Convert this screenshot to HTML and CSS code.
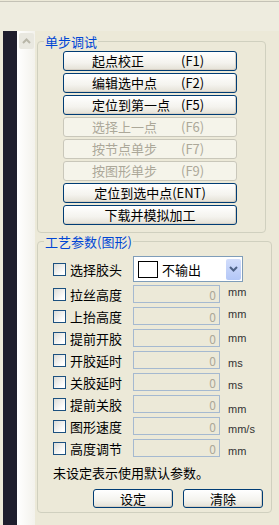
FILE: index.html
```html
<!DOCTYPE html>
<html lang="zh-CN">

<head>
    <meta charset="UTF-8">
    <meta name="viewport" content="width=device-width, initial-scale=1.0">
    <title>单步调试</title>
    <link rel="stylesheet" href="styles.css">
</head>

<body>
    <div class="topbar"></div>
    <div class="main">
        <div class="edge"></div>
        <div class="dark"></div>
        <div class="scroll">
            <div class="scroll-up">
                <svg width="9" height="6" viewBox="0 0 9 6"><path d="M1 5 L4.5 1.5 L8 5" fill="none" stroke="#b8b6a8" stroke-width="2"/></svg>
            </div>
        </div>

        <div class="panel">
            <!-- 单步调试 -->
            <fieldset class="group step">
                <legend>单步调试</legend>
                <div class="btn-list">
                    <button class="btn"><span class="name">起点校正</span>(F1)</button>
                    <button class="btn"><span class="name">编辑选中点</span>(F2)</button>
                    <button class="btn"><span class="name">定位到第一点</span>(F5)</button>
                    <button class="btn" disabled><span class="name">选择上一点</span>(F6)</button>
                    <button class="btn" disabled><span class="name">按节点单步</span>(F7)</button>
                    <button class="btn" disabled><span class="name">按图形单步</span>(F9)</button>
                    <button class="btn center">定位到选中点(ENT)</button>
                    <button class="btn center">下载并模拟加工</button>
                </div>
            </fieldset>

            <!-- 工艺参数 -->
            <fieldset class="group params">
                <legend>工艺参数(图形)</legend>
                <div class="param-body">
                    <div class="row first">
                        <span class="check"></span>
                        <span class="label">选择胶头</span>
                        <div class="combo">
                            <span class="swatch"></span>
                            <span class="combo-text">不输出</span>
                            <span class="combo-btn">
                                <svg width="9" height="6" viewBox="0 0 9 6"><path d="M1 1 L4.5 4.5 L8 1" fill="none" stroke="#4d6185" stroke-width="2"/></svg>
                            </span>
                        </div>
                    </div>
                    <div class="row"><span class="check"></span><span class="label">拉丝高度</span><span class="field">0</span><span class="unit up">mm</span></div>
                    <div class="row"><span class="check"></span><span class="label">上抬高度</span><span class="field">0</span><span class="unit up">mm</span></div>
                    <div class="row"><span class="check"></span><span class="label">提前开胶</span><span class="field">0</span><span class="unit">mm</span></div>
                    <div class="row"><span class="check"></span><span class="label">开胶延时</span><span class="field">0</span><span class="unit down">ms</span></div>
                    <div class="row"><span class="check"></span><span class="label">关胶延时</span><span class="field">0</span><span class="unit down">ms</span></div>
                    <div class="row"><span class="check"></span><span class="label">提前关胶</span><span class="field">0</span><span class="unit low">mm</span></div>
                    <div class="row"><span class="check"></span><span class="label">图形速度</span><span class="field">0</span><span class="unit down">mm/s</span></div>
                    <div class="row"><span class="check"></span><span class="label">高度调节</span><span class="field">0</span><span class="unit down">mm</span></div>
                    <p class="hint">未设定表示使用默认参数。</p>
                    <div class="actions">
                        <button class="btn small">设定</button>
                        <button class="btn small">清除</button>
                    </div>
                </div>
            </fieldset>
        </div>
    </div>
</body>

</html>
```

FILE: styles.css
```css
body {
    margin: 0;
    font-family: "Noto Sans CJK SC", "Noto Sans", sans-serif;
    font-size: 13px;
    color: #000;
    background-color: #ece9d8;
}

.topbar {
    height: 29px;
    margin-top: 1px;
    border-top: 1px solid #c4c2b6;
    background-color: #eeecdf;
}

.main {
    display: flex;
    height: 494px;
}

.edge {
    width: 3px;
    background-color: #ece9d8;
}

.dark {
    width: 14px;
    background-color: #1f1e2d;
}

.scroll {
    width: 18px;
    background: linear-gradient(to right, #ffffff, #f3f2ec);
}

.scroll-up {
    width: 15px;
    height: 16px;
    margin: 2px 0 0 2px;
    display: flex;
    align-items: center;
    justify-content: center;
    background-color: #e9e8e0;
    border-radius: 2px;
}

.panel {
    flex: 1;
    padding-left: 2px;
}

.group {
    margin: 0;
    padding: 0;
    border: 1px solid #d0d0bf;
    border-radius: 4px;
    min-width: 0;
    box-sizing: border-box;
}

.group legend {
    margin-left: 6px;
    padding: 0 1px;
    color: #0046d5;
    font-size: 13px;
    line-height: 15px;
}

.step {
    width: 229px;
    margin-top: 3px;
}

.btn-list {
    display: flex;
    flex-direction: column;
    gap: 2px;
    padding: 2px 0 7px 25px;
}

.btn {
    width: 174px;
    height: 20px;
    padding: 0 0 0 28px;
    font-family: inherit;
    font-size: 13px;
    line-height: 18px;
    color: #000;
    text-align: left;
    border: 1px solid #003c74;
    border-radius: 3px;
    background: linear-gradient(#ffffff, #f4f3ee 60%, #e4e1d6);
    box-shadow: inset -1px -1px 0 #d6d0c5;
    white-space: pre;
}

.btn .name {
    display: inline-block;
    width: 89px;
}

.btn.center {
    padding: 0;
    text-align: center;
}

.btn:disabled {
    color: #aca899;
    border-color: #c9c7ba;
    background: #f5f4ea;
    box-shadow: none;
}

.params {
    width: 235px;
    margin-top: 1px;
}

.param-body {
    padding: 7px 0 2px 15px;
}

.row {
    display: flex;
    align-items: center;
    height: 18px;
    margin-bottom: 4px;
}

.row.first {
    height: 26px;
    margin-bottom: 3px;
}

.check {
    width: 11px;
    height: 11px;
    border: 1px solid #1c5180;
    background: linear-gradient(135deg, #dcdcd7, #ffffff 80%);
}

.label {
    width: 52px;
    margin-left: 4px;
    line-height: 15px;
}

.field {
    width: 82px;
    height: 16px;
    margin-left: 11px;
    padding-right: 3px;
    border: 1px solid #a5b9d0;
    background-color: #ece9d8;
    color: #aca899;
    font-size: 12px;
    line-height: 18px;
    text-align: right;
}

.unit {
    margin-left: 8px;
    font-family: "Liberation Sans", Arial, sans-serif;
    font-size: 11px;
    color: #333;
    align-self: flex-start;
    line-height: 12px;
    margin-top: 3px;
}

.unit.up {
    margin-top: 1px;
}

.unit.down {
    margin-top: 6px;
}

.unit.low {
    margin-top: 8px;
}

.combo {
    display: flex;
    align-items: center;
    width: 108px;
    height: 24px;
    margin-left: 11px;
    border: 1px solid #7f9db9;
    background-color: #fff;
}

.swatch {
    width: 18px;
    height: 15px;
    margin-left: 4px;
    border: 1px solid #000;
}

.combo-text {
    flex: 1;
    margin-left: 4px;
    line-height: 15px;
}

.combo-btn {
    width: 15px;
    height: 21px;
    margin-right: 1px;
    display: flex;
    align-items: center;
    justify-content: center;
    border-radius: 2px;
    background: linear-gradient(#d2ddfb, #b3c7f7);
}

.hint {
    margin: 8px 0 0;
    line-height: 15px;
}

.actions {
    display: flex;
    gap: 10px;
    margin: 9px 0 2px 40px;
}

.btn.small {
    width: 80px;
    height: 19px;
    padding: 0;
    text-align: center;
    line-height: 17px;
}
```
